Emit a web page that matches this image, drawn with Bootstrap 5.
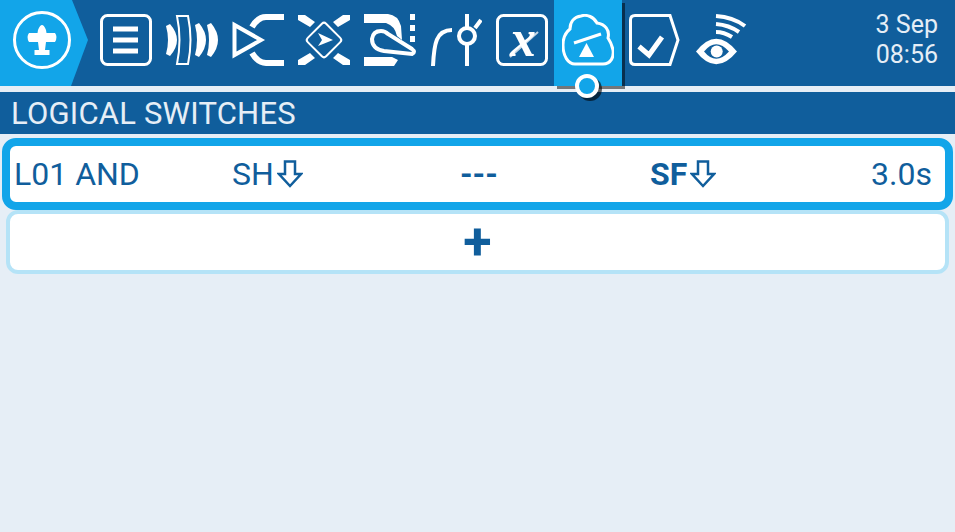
<!DOCTYPE html>
<html lang="en">
<head>
    <meta charset="UTF-8">
    <meta name="viewport" content="width=device-width, initial-scale=1.0">
    <title>Logical Switches</title>
    <link href="https://cdn.jsdelivr.net/npm/bootstrap@5.3.0/dist/css/bootstrap.min.css" rel="stylesheet">
    <script src="https://cdn.jsdelivr.net/npm/bootstrap@5.3.0/dist/js/bootstrap.bundle.min.js"></script>
    <style>
        body {
            background-color: #e6eef6;
            font-family: Roboto, "Liberation Sans", sans-serif;
            color: #105e9c;
            overflow: hidden;
        }
        svg { display: block; flex: none; }
        .top-bar {
            height: 86px;
            background-color: #105e9c;
            position: relative;
            z-index: 2;
        }
        .home-tab {
            width: 88px;
            height: 86px;
            margin-right: 12px;
            background-color: #12a5e9;
            clip-path: polygon(0 0, 72px 0, 88px 40px, 71px 86px, 0 86px);
            flex: none;
        }
        .tab-icon { width: 52px; height: 52px; margin: 14px 14px 0 0; }
        .tab-active {
            width: 68px;
            height: 86px;
            margin: 0 7px 0 -8px;
            padding: 14px 8px 0;
            background-color: #12a5e9;
            box-shadow: 3px 3px 0 rgba(0, 0, 0, .5);
            position: relative;
            flex: none;
        }
        .tab-dot {
            position: absolute;
            left: 21px;
            top: 74px;
            width: 24px;
            height: 24px;
            border: 4px solid #fff;
            border-radius: 50%;
            background-color: #12a5e9;
            box-shadow: 3px 3px 0 rgba(0, 0, 0, .6);
        }
        .clock {
            margin-left: auto;
            padding: 10px 17px 0 0;
            color: #e6eef6;
            font-size: 25px;
            line-height: 30px;
            text-align: right;
        }
        .title-bar {
            height: 42px;
            margin-top: 6px;
            padding: 1px 0 0 11px;
            background-color: #105e9c;
            color: #e6eef6;
            font-size: 31px;
            letter-spacing: .2px;
            line-height: 42px;
        }
        .switch-list { padding-top: 4px; }
        .switch-row {
            height: 72px;
            margin: 0 2px;
            padding: 0 13px 0 4px;
            border: 8px solid #12a5e9;
            border-radius: 14px;
            background-color: #fff;
            display: grid;
            grid-template-columns: 218px 228px 190px 1fr auto;
            align-items: center;
            font-size: 32px;
            line-height: 40px;
        }
        .arrow-icon { margin-left: 3px; }
        .add-row {
            height: 64px;
            margin: 0 6px;
            border: 4px solid #b5e3f7;
            border-radius: 12px;
            background-color: #fff;
            font-size: 52px;
            font-weight: 700;
            line-height: 56px;
        }
    </style>
</head>
<body>
    <div class="top-bar d-flex">
        <div class="home-tab">
            <svg width="88" height="86" viewBox="0 0 88 86" fill="#fff">
                <circle cx="42" cy="40" r="27.5" fill="none" stroke="#fff" stroke-width="3"/>
                <path d="M38,30 Q40,25 42,25 Q44,25 46,30 L46.5,33 H55 Q58,37 55,42 H46 L45,50 H49.5 V55 H34.5 V50 H39 L38,42 H29 Q26,37 29,33 H37.5Z"/>
            </svg>
        </div>

        <svg class="tab-icon" viewBox="0 0 52 52">
            <rect x="1.5" y="1.5" width="49" height="49" rx="6" fill="none" stroke="#fff" stroke-width="3"/>
            <path d="M13,15 H38 M13,26 H38 M13,37 H38" stroke="#fff" stroke-width="5"/>
        </svg>

        <svg class="tab-icon" viewBox="0 0 52 52" fill="#fff">
            <path d="M0,12 L4,10 Q18,26 4,42 L0,40 Q4,26 0,12Z"/>
            <path d="M29,11 L33,9 Q47,26 33,43 L29,41 Q33,26 29,11Z"/>
            <path d="M41,11 L45,9 Q59,26 45,43 L41,41 Q45,26 41,11Z"/>
            <path d="M11,2 H22 Q27,26 22,50 H11 Q16,26 11,2Z" fill="none" stroke="#fff" stroke-width="2"/>
        </svg>

        <svg class="tab-icon" viewBox="0 0 52 52" fill="none" stroke="#fff">
            <path d="M2.5,11 V41 L29,26Z" stroke-width="4"/>
            <path d="M52,3 H34 Q26,3 20,13 M52,49 H34 Q26,49 20,39" stroke-width="6"/>
        </svg>

        <svg class="tab-icon" viewBox="0 0 52 52" fill="#fff">
            <path d="M0,1 H7 L17,8 L12,13 L0,6Z M52,1 H45 L35,8 L40,13 L52,6Z M0,51 H7 L17,44 L12,39 L0,46Z M52,51 H45 L35,44 L40,39 L52,46Z"/>
            <rect x="13" y="13" width="26" height="26" rx="3" fill="none" stroke="#fff" stroke-width="2" transform="rotate(45 26 26)"/>
            <path d="M20,19 L35,26 L20,32 L24,26Z"/>
        </svg>

        <svg class="tab-icon" viewBox="0 0 52 52" fill="#fff">
            <path d="M0,0 H24 Q34,1 37,12 L38,26 L33,22 Q31,12 22,9 H0Z"/>
            <path d="M0,43 H28 L34,46 L30,52 H0Z"/>
            <path d="M46,0 H51 V6 H46Z M46,11 H51 V17 H46Z M46,22 H51 V28 H46Z"/>
            <path d="M8,25 Q9,17 17,17 Q21,17 24,20 L48,35 Q52,38 48,40 L20,37 Q8,35 8,25Z" fill="#105e9c" stroke="#fff" stroke-width="4"/>
        </svg>

        <svg class="tab-icon" viewBox="0 0 52 52" fill="none" stroke="#fff" stroke-width="4">
            <path d="M3,52 C4,30 6,16 22,16"/>
            <path d="M37,0 V14 M37,30 V52 M45,14 L51,6"/>
            <circle cx="37" cy="22" r="8"/>
        </svg>

        <svg class="tab-icon" viewBox="0 0 52 52" overflow="visible">
            <rect x="1.5" y="1.5" width="49" height="49" rx="6" fill="none" stroke="#fff" stroke-width="3"/>
            <text x="27" y="42" text-anchor="middle" fill="#fff" font-family="'Liberation Serif', serif" font-size="52" font-weight="700" font-style="italic">x</text>
            <path d="M42,18 L14,43" stroke="#fff" stroke-width="2" opacity=".75"/>
        </svg>

        <div class="tab-active">
            <svg width="52" height="52" viewBox="0 0 52 52" fill="none" stroke="#fff" stroke-width="3">
                <path d="M13,50 H41 C49,50 52,43 51,36 C50,30 48,27 46,24 C48,16 43,10 35,9 C32,3 25,0 19,2 C12,3 8,8 8,15 C3,19 1,25 1,31 C1,42 6,50 13,50Z"/>
                <path d="M12,29 L39,20"/>
                <path d="M24.5,29 L32,43 H17Z" fill="#fff" stroke="none"/>
            </svg>
            <div class="tab-dot"></div>
        </div>

        <svg class="tab-icon" viewBox="0 0 52 52" fill="none" stroke="#fff">
            <path d="M6,1.5 H41 L49,26 L41,50.5 H6 Q1.5,50.5 1.5,46 V6 Q1.5,1.5 6,1.5Z" stroke-width="3"/>
            <path d="M10,32.5 L20,41 L33,23" stroke-width="5"/>
        </svg>

        <svg class="tab-icon" viewBox="0 0 52 52">
            <path d="M1,37.5 Q21,12 42,37.5 Q21,63 1,37.5Z" fill="#fff"/>
            <path d="M9,37.5 Q21,23 34,37.5 Q21,52 9,37.5Z" fill="#105e9c"/>
            <circle cx="21.7" cy="37.5" r="6" fill="#fff"/>
            <path d="M21,2 Q38,3 50,12 M21,10 Q34,11 44,18 M21,18 Q29,18 37,23" fill="none" stroke="#fff" stroke-width="4"/>
        </svg>

        <div class="clock">3 Sep<br>08:56</div>
    </div>

    <div class="title-bar">LOGICAL SWITCHES</div>

    <div class="switch-list">
        <div class="switch-row">
            <div>L01 AND</div>
            <div class="d-flex align-items-center">SH
                <svg class="arrow-icon" width="26" height="28" viewBox="0 0 26 28" fill="none" stroke="#105e9c" stroke-width="2.5">
                    <path d="M8,1.5 H18 V14 H24 L13,26 L2,14 H8Z"/>
                </svg>
            </div>
            <div class="fw-bold">---</div>
            <div class="d-flex align-items-center fw-bold">SF
                <svg class="arrow-icon" width="26" height="28" viewBox="0 0 26 28" fill="none" stroke="#105e9c" stroke-width="2.5">
                    <path d="M8,1.5 H18 V14 H24 L13,26 L2,14 H8Z"/>
                </svg>
            </div>
            <div class="text-end">3.0s</div>
        </div>
        <div class="add-row text-center">+</div>
    </div>
</body>
</html>
